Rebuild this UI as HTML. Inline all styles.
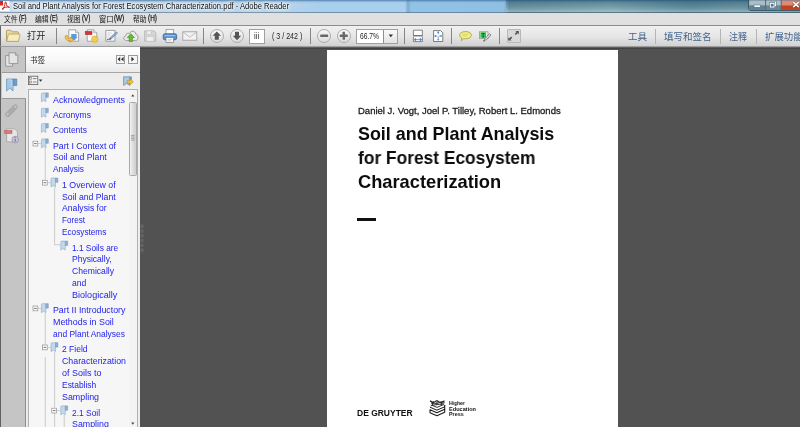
<!DOCTYPE html>
<html lang="zh">
<head>
<meta charset="utf-8">
<title>Soil and Plant Analysis for Forest Ecosystem Characterization.pdf - Adobe Reader</title>
<style>
*{box-sizing:border-box;margin:0;padding:0}
html,body{width:800px;height:427px;overflow:hidden;background:#525252;font-family:"Liberation Sans","Noto Sans CJK SC",sans-serif;}
.abs{position:absolute}
.t{position:absolute;white-space:nowrap;transform-origin:0 50%;line-height:1}
svg{position:absolute;overflow:visible}
#titlebar{left:0;top:0;width:800px;height:13px;background:linear-gradient(rgba(45,95,145,.7) 0,rgba(60,110,160,.22) 1.6px,rgba(255,255,255,0) 3px,rgba(255,255,255,0) 11.6px,rgba(60,80,95,.55) 12.6px),linear-gradient(90deg,#cbddec 0,#bfd7ea 120px,#b4d3ec 290px,#a8cfed 320px,#a8cfed 405px,#7eaad0 408px,#93c2e7 411px,#90bfe4 504px,#66929f 509px,#78a2ad 610px,#5c8999 690px,#68929f 740px,#567f8e 800px)}
#tbr{left:506px;top:0;width:294px;height:12px;background:linear-gradient(rgba(20,60,85,.32) 0,rgba(20,60,85,.1) 45%,rgba(255,255,255,.08) 75%,rgba(255,255,255,.3) 100%)}
#menubar{left:0;top:12.6px;width:800px;height:13px;background:#e0e0e0;border-bottom:1px solid #8c8c8c}
#toolbar{left:0;top:25.6px;width:800px;height:21.4px;background:linear-gradient(#f0f0f0,#e6e6e6 50%,#cfcfcf);border-left:1px solid #666}
#tbline{left:0;top:46.4px;width:800px;height:2.6px;background:linear-gradient(#c2c2c2 0,#6a6a6a 40%,#3e3e3e 75%,#4a4a4a 100%)}
.sep{position:absolute;top:28px;width:1px;height:16px;background:#868686}
.sep2{position:absolute;top:29px;width:1px;height:15px;background:#b4b4b4}
#navstrip{left:0;top:47.4px;width:26.2px;height:380px;background:#c5c5c5;border-left:1.6px solid #606060;border-right:.8px solid #8e8e8e}
#navact{left:1.6px;top:72px;width:25px;height:27px;background:#eaeaea;border-top:1px solid #9a9a9a;border-bottom:1px solid #9a9a9a}
#bmhead{left:26.2px;top:47.4px;width:113.8px;height:24.6px;background:linear-gradient(#ffffff,#f7f7f7 55%,#e9e9e9);}
#bmbody{left:26.2px;top:72px;width:113.8px;height:355px;background:#ededed;border-top:1px solid #a6a6a6}
#tree{left:28px;top:89px;width:110px;height:345px;background:#f6f6f6;border:1px solid #b0b0b0}
#sbar{left:128.5px;top:90px;width:8.5px;height:337px;background:#f3f3f3}
#thumb{left:129px;top:101.5px;width:7.5px;height:74.5px;border:1px solid #a8a8a8;border-radius:1.5px;background:linear-gradient(90deg,#f4f4f4,#dcdcdc 50%,#cfcfcf)}
#page{left:326.7px;top:50px;width:291.4px;height:380px;background:#fff}
.cb{position:absolute;width:14px;height:14px;border-radius:50%;border:1px solid #acacac;background:linear-gradient(#f8f8f8,#dcdcdc)}
.box{position:absolute;background:#fff;border:1px solid #a0a0a0}
.pb{position:absolute;top:54.5px;height:9.5px;border:1px solid #9a9a9a;background:#f6f6f6}
#wrap{position:absolute;left:0;top:0;width:800px;height:427px;overflow:hidden;filter:blur(.35px)}
</style>
</head>
<body>
<div id="wrap">
<div id="titlebar" class="abs"></div><div id="tbr" class="abs"></div>
<div id="menubar" class="abs"></div>
<div id="toolbar" class="abs"></div>
<div id="tbline" class="abs"></div>
<div class="sep" style="left:56px"></div><div class="sep" style="left:203px"></div><div class="sep" style="left:310px"></div><div class="sep" style="left:404px"></div><div class="sep" style="left:451px"></div><div class="sep" style="left:499px"></div>
<div class="sep2" style="left:655px"></div><div class="sep2" style="left:720px"></div><div class="sep2" style="left:756px"></div>
<div class="cb" style="left:209.8px;top:28.8px"></div><div class="cb" style="left:230px;top:28.8px"></div>
<div class="cb" style="left:317.2px;top:28.8px"></div><div class="cb" style="left:336.8px;top:28.8px"></div>
<div class="box" style="left:249px;top:28.5px;width:16px;height:15.5px"></div>
<div class="box" style="left:356px;top:28.5px;width:42px;height:15px;background:linear-gradient(#fafafa,#e2e2e2)"></div>
<div class="abs" style="left:357px;top:29.5px;width:27px;height:13px;background:#fff;border-right:1px solid #8e8e8e"></div>
<div class="abs" style="left:506.5px;top:29px;width:14px;height:13.5px;background:#d9d9d9;border:1px solid #b8b8b8;border-radius:1px"></div>
<div id="navstrip" class="abs"></div><div id="navact" class="abs"></div>
<div id="bmhead" class="abs"></div>
<div id="bmbody" class="abs"></div>
<div id="tree" class="abs"></div>
<div id="sbar" class="abs"></div><div id="thumb" class="abs"></div>
<div class="pb" style="left:115.7px;width:9.8px"></div><div class="pb" style="left:127.9px;width:9.8px"></div>
<div id="page" class="abs"></div>
<div class="abs" style="left:357px;top:218px;width:18.6px;height:2.6px;background:#111"></div>
<svg id="ic" width="800" height="427" viewBox="0 0 800 427" style="left:0;top:0">
<!-- title pdf icon -->
<g>
<rect x="0" y="1" width="9.5" height="10" fill="#fff"/>
<rect x="0" y="1" width="3" height="4.5" fill="#d4282a"/>
<path d="M2.5 10 C4 8 5 5 5 3 C5 1.5 6.2 1.5 6.2 3 C6 5.5 8 7.5 9.5 7.5 M2 8.6 C4.5 7.2 7 6.8 9.5 7" fill="none" stroke="#c8201c" stroke-width="1"/>
</g>
<!-- window buttons -->
<g>
<path d="M748.5 0 H800 V10.5 H751 Q748.5 10.5 748.5 8 Z" fill="#7f9fae" stroke="#2e4a58" stroke-width=".8"/>
<rect x="749.3" y="0.5" width="16" height="5" fill="#a9bdc8"/><rect x="749.3" y="5.5" width="16" height="4.4" fill="#5f8192"/>
<rect x="766" y="0.5" width="15" height="5" fill="#a9bdc8"/><rect x="766" y="5.5" width="15" height="4.4" fill="#668797"/>
<rect x="781.5" y="0.5" width="18.5" height="5" fill="#dd8a78"/><rect x="781.5" y="5.5" width="18.5" height="4.4" fill="#c6401f"/>
<path d="M765.6 0 V10 M781.2 0 V10" stroke="#3a5462" stroke-width=".7"/>
<rect x="754" y="5" width="6.3" height="2.2" fill="#fff" stroke="#44606e" stroke-width=".5"/>
<rect x="771.8" y="2" width="3.8" height="3.8" fill="none" stroke="#44606e" stroke-width="1.8"/>
<rect x="771.8" y="2" width="3.8" height="3.8" fill="none" stroke="#fff" stroke-width="1"/>
<rect x="770.3" y="3.3" width="3.8" height="3.8" fill="#7f9fae" stroke="#44606e" stroke-width="1.8"/>
<rect x="770.3" y="3.3" width="3.8" height="3.8" fill="#58788a" stroke="#fff" stroke-width="1"/>
<path d="M793.2 2.2 L798.8 7.2 M798.8 2.2 L793.2 7.2" stroke="#6a2a1a" stroke-width="2.6"/>
<path d="M793.2 2.2 L798.8 7.2 M798.8 2.2 L793.2 7.2" stroke="#fff" stroke-width="1.7"/>
</g>
<!-- folder -->
<g stroke-linejoin="round">
<path d="M6.5 41 V31 Q6.5 30.2 7.3 30.2 H10.8 L12 31.8 H17.6 Q18.4 31.8 18.4 32.6 V41 Z" fill="#ead9a0" stroke="#a98f55" stroke-width=".8"/>
<path d="M6.6 41.4 L8.3 34.6 Q8.5 34 9.2 34 H19.4 Q20.2 34 20 34.8 L18.4 41.4 Z" fill="#f6ebbd" stroke="#b49a5e" stroke-width=".8"/>
</g>
<!-- icon1: page + blue arrow + yellow curved arrow -->
<g>
<path d="M68.8 29.8 H75.6 L78.6 32.8 V41.2 H68.8 Z" fill="#fdfdfd" stroke="#8e8e8e" stroke-width=".8"/>
<path d="M75.6 29.8 V32.8 H78.6" fill="#e8e8e8" stroke="#8e8e8e" stroke-width=".6"/>
<path d="M71.2 34 H76.6 V37.2 H77.6 L73.9 40.8 L70.2 37.2 H71.2 Z" fill="#5a9bdc"/>
<path d="M65.2 36 C64.6 39.5 67.5 41.4 70.2 40.6 V42.3 L73.4 39.6 L70.2 37 V38.6 C68.4 39 66.8 38 67.4 35.4 Z" fill="#f4c644" stroke="#c28a18" stroke-width=".6" stroke-linejoin="round"/>
</g>
<!-- icon2: page + red label + gear -->
<g>
<path d="M87.2 29.8 H93.8 L96.8 32.8 V41.2 H87.2 Z" fill="#fdfdfd" stroke="#8e8e8e" stroke-width=".8"/>
<path d="M93.8 29.8 V32.8 H96.8" fill="#e8e8e8" stroke="#8e8e8e" stroke-width=".6"/>
<rect x="85.2" y="31.4" width="6.8" height="3.2" fill="#dc3236" stroke="#a81c20" stroke-width=".5"/>
<path d="M98.50 39.30 L97.48 40.41 L97.42 41.92 L95.91 41.98 L94.80 43.00 L93.69 41.98 L92.18 41.92 L92.12 40.41 L91.10 39.30 L92.12 38.19 L92.18 36.68 L93.69 36.62 L94.80 35.60 L95.91 36.62 L97.42 36.68 L97.48 38.19 Z" fill="#f3cd52" stroke="#c79a26" stroke-width=".5" stroke-linejoin="round"/>
</g>
<!-- icon3: page + pen -->
<g>
<path d="M105.8 30.4 H115 V41.2 H105.8 Z" fill="#f8f8f8" stroke="#8a8a8a" stroke-width=".8"/>
<path d="M107.4 33 H111.5 M107.4 35 H110.5 M107.4 37 H109.5" stroke="#c4c4c4" stroke-width=".7"/>
<rect x="107.3" y="38.8" width="1.2" height="1.2" fill="#333"/>
<path d="M109.2 39.8 L109.9 37.8 L116.4 31.9 L117.6 33.1 L111.1 39.1 Z" fill="#86aedb" stroke="#4a6c98" stroke-width=".5" stroke-linejoin="round"/>
<path d="M109.2 39.8 L109.9 37.8 L111.1 39.1 Z" fill="#555"/>
</g>
<!-- icon4: cloud + green arrow -->
<g>
<path d="M126.6 40.6 C123.4 40.6 122.6 36.6 125.8 35.8 C125.6 33.4 128.2 32.4 129.6 33.6 C130.6 30.2 135.4 30.4 135.8 34.2 C138.8 34.4 139 40.6 135.4 40.6 Z" fill="#e9e9e9" stroke="#8c8c8c" stroke-width=".8"/>
<path d="M130.8 33.8 L134.4 37.6 H132.4 V41.6 H129.2 V37.6 H127.2 Z" fill="#66bb33" stroke="#3d8a1a" stroke-width=".6" stroke-linejoin="round"/>
</g>
<!-- icon5: floppy disabled -->
<g>
<path d="M144.6 30.9 H154.2 L155.8 32.5 V41.2 H144.6 Z" fill="#d6d6d6" stroke="#b2b2b2" stroke-width=".8"/>
<rect x="146.8" y="30.9" width="6" height="3.6" fill="#eee" stroke="#c2c2c2" stroke-width=".6"/>
<rect x="146.4" y="36.6" width="7.4" height="4.6" fill="#f0f0f0" stroke="#c2c2c2" stroke-width=".6"/>
<rect x="150.8" y="31.5" width="1.2" height="2.2" fill="#c4c4c4"/>
</g>
<!-- icon6: printer -->
<g>
<rect x="166" y="29.5" width="7.6" height="5" fill="#fcfcfc" stroke="#8a8a8a" stroke-width=".7"/>
<rect x="163.2" y="33.8" width="13.4" height="6" rx="1.6" fill="#5d93cd" stroke="#2f5f96" stroke-width=".8"/>
<rect x="164.4" y="35" width="11" height="1.2" fill="#9cc2e8"/>
<rect x="166" y="37.6" width="7.6" height="4.8" fill="#fcfcfc" stroke="#7a7a7a" stroke-width=".7"/>
<path d="M167.4 39.4 H172.2 M167.4 40.8 H171" stroke="#b0b0b0" stroke-width=".6"/>
</g>
<!-- icon7: envelope -->
<g>
<rect x="182.8" y="31.8" width="14" height="8.4" fill="#f1f1f1" stroke="#9a9a9a" stroke-width=".8"/>
<path d="M183 32 L189.8 37.2 L196.6 32" fill="none" stroke="#a6a6a6" stroke-width=".7"/>
</g>
<!-- up/down arrows -->
<path d="M216.8 31.4 L221 35.8 H218.8 V39.8 H214.8 V35.8 H212.6 Z" fill="#565656"/>
<path d="M237 40.2 L241.2 35.8 H239 V31.8 H235 V35.8 H232.8 Z" fill="#565656"/>
<!-- minus/plus -->
<rect x="320.2" y="34.6" width="8" height="2.4" rx=".4" fill="#686868"/>
<rect x="339.8" y="34.6" width="8" height="2.4" rx=".4" fill="#686868"/><rect x="342.6" y="31.8" width="2.4" height="8" rx=".4" fill="#686868"/>
<!-- dropdown arrow -->
<path d="M388.6 34.6 H393 L390.8 37.2 Z" fill="#333"/>
<!-- fit width -->
<g>
<path d="M413.4 35 V30.2 H422.4 V35" fill="#fff" stroke="#6a6a6a" stroke-width=".8"/>
<path d="M413 35.8 H422.8" stroke="#444" stroke-width="1"/>
<path d="M413.4 36.8 V41.6 H422.4 V36.8" fill="#fff" stroke="#6a6a6a" stroke-width=".8"/>
<path d="M414.2 39.6 H421.6 M414.2 39.6 l1.4 -1.3 v2.6z M421.6 39.6 l-1.4 -1.3 v2.6z" fill="#4a86d0" stroke="#4a86d0" stroke-width=".8"/>
</g>
<!-- fit page -->
<g>
<path d="M433.6 30.6 H440.6 L442.8 32.8 V41.5 H433.6 Z" fill="#fff" stroke="#5e5e5e" stroke-width=".8"/>
<path d="M438.2 31.6 V40.4 M434.6 36 H441.8" stroke="#4a86d0" stroke-width=".8" stroke-dasharray="2.6 2"/>
<path d="M438.2 31.3 l1.3 1.5 h-2.6z M438.2 40.8 l1.3 -1.5 h-2.6z M434.3 36 l1.5 -1.3 v2.6z M442.1 36 l-1.5 -1.3 v2.6z" fill="#3f7ccc"/>
</g>
<!-- comment bubble -->
<path d="M465.6 31.6 C469.2 31.6 471.4 33.2 471.4 35.2 C471.4 37.4 468.8 38.8 465.6 38.8 C465 38.8 464.4 38.8 463.8 38.6 L461.4 40.8 L461.8 38 C460.4 37.4 459.6 36.4 459.6 35.2 C459.6 33.2 462 31.6 465.6 31.6 Z" fill="#f2ee86" stroke="#a09c3a" stroke-width=".8" stroke-linejoin="round"/>
<path d="M462.4 34.4 H468.6 M462.4 36 H467" stroke="#d2cc60" stroke-width=".7"/>
<!-- highlight -->
<g>
<rect x="479.6" y="31.8" width="8.4" height="6.8" fill="#eee" stroke="#8a8a8a" stroke-width=".7"/>
<rect x="480.4" y="32.4" width="5.6" height="5.4" fill="#2fc24a"/>
<path d="M481.6 33.4 H484.8 M483.2 33.4 V37 M482.4 37 H484" stroke="#0a5a1a" stroke-width=".8"/>
<path d="M484.2 40.4 L485 38.4 L489.6 33.6 L491 35 L486.4 39.8 Z" fill="#d8d8d8" stroke="#555" stroke-width=".6" stroke-linejoin="round"/>
<circle cx="484" cy="40.8" r=".9" fill="#2fa040"/>
</g>
<!-- expand arrows -->
<g fill="#555">
<path d="M515.4 31 H518.8 V34.4 L517.7 33.3 L515.9 35.1 L514.7 33.9 L516.5 32.1 Z"/>
<path d="M511.6 40.6 H508.2 V37.2 L509.3 38.3 L511.1 36.5 L512.3 37.7 L510.5 39.5 Z"/>
</g>
<!-- panel header buttons -->
<path d="M120.2 56.8 V61.6 L117.6 59.2 Z M123.6 56.8 V61.6 L121 59.2 Z" fill="#333"/>
<path d="M131.4 56.8 V61.6 L134.2 59.2 Z" fill="#333"/>
<!-- nav: pages icon -->
<g fill="#e4e4e4" stroke="#8a8a8a" stroke-width=".8">
<path d="M5.6 55.6 H12.6 V66.2 H5.6 Z"/>
<path d="M9 52.8 H15.4 L17.8 55.2 V63.6 H9 Z"/>
<path d="M15.4 52.8 V55.2 H17.8" fill="none"/>
</g>
<!-- nav: bookmark ribbon (active) -->
<g>
<path d="M6.6 79 H13 V91 L9.8 88 L6.6 91 Z" fill="#a4c9e8" stroke="#5f8db6" stroke-width=".7" stroke-linejoin="round"/>
<path d="M13 79 H16.8 V85.6 H13 Z" fill="#6f9cc6" stroke="#4f7ca6" stroke-width=".6"/>
<path d="M7.6 80 H12 V87" fill="none" stroke="#c4ddf2" stroke-width=".8"/>
</g>
<!-- nav: paperclip -->
<path d="M8.6 116.4 L16.6 108.2 C18.4 106.2 15.8 103.6 13.8 105.6 L6.2 113.4 C4.8 115 6.8 117 8.4 115.6 L14.6 109.2 C15.4 108.2 14.2 107.2 13.4 108 L8.6 113" fill="none" stroke="#a4a4a4" stroke-width="1.1" stroke-linecap="round"/>
<!-- nav: red doc with info -->
<g>
<path d="M6.6 128.8 H14.6 L17.4 131.6 V141.8 H6.6 Z" fill="#e6e6e6" stroke="#a2a2a2" stroke-width=".8"/>
<rect x="4.6" y="130.4" width="7.4" height="3.2" fill="#d87a7c" stroke="#b85a5e" stroke-width=".5"/>
<circle cx="15.2" cy="139.6" r="3.3" fill="#c9c4d8" stroke="#8e88a8" stroke-width=".7"/>
<path d="M15.2 138.8 V141.6 M15.2 137.2 V138" stroke="#6a648a" stroke-width="1"/>
</g>
<!-- panel toolbar: options icon -->
<g>
<rect x="28.4" y="76.2" width="9.4" height="8.4" fill="#f4f4f4" stroke="#5e5e5e" stroke-width=".8"/>
<rect x="29.6" y="77.6" width="2" height="2" fill="none" stroke="#555" stroke-width=".5"/><rect x="29.6" y="81" width="2" height="2" fill="none" stroke="#555" stroke-width=".5"/>
<path d="M32.8 78.6 H36.6 M32.8 82 H36.6" stroke="#666" stroke-width=".8"/>
<path d="M38.8 79.6 H42.4 L40.6 81.8 Z" fill="#333"/>
</g>
<!-- panel toolbar: new bookmark -->
<g>
<path d="M123.6 76.8 H129.6 V85.4 L126.6 83.4 L123.6 85.4 Z" fill="#a9cbe8" stroke="#5e86ae" stroke-width=".7" stroke-linejoin="round"/>
<path d="M129.6 76.8 H131.4 V80 H129.6" fill="#6e9cc8" stroke="#4c78a6" stroke-width=".5"/>
<path d="M127 80.6 H130 V78.8 L133.4 81.8 L130 84.8 V83 H127 Z" fill="#f3c240" stroke="#bf8a1c" stroke-width=".6" stroke-linejoin="round"/>
</g>
<!-- scrollbar arrows and grip -->
<path d="M131.2 96.4 L132.8 94.2 L134.4 96.4 Z" fill="#444"/>
<path d="M131.2 422.6 L132.8 424.8 L134.4 422.6 Z" fill="#444"/>
<path d="M131 135.4 H134.6 M131 137 H134.6 M131 138.6 H134.6 M131 140.2 H134.6" stroke="#8a8a8a" stroke-width=".7"/>
<!-- resize grip in dark area -->
<path d="M142.1 224.5 V253.5" stroke="#646464" stroke-width="3" stroke-dasharray="3.4 1.4"/>
<g><path d="M41.4 93.9 Q41.4 92.9 42.4 92.9 H45.9 V101.8 L43.65 100.4 L41.4 101.8 Z" fill="#c2d9ec" stroke="#8fa8be" stroke-width=".6" stroke-linejoin="round"/><path d="M45.9 92.9 H48.3 V97.3 H45.9 Z" fill="#8db0d2" stroke="#7494b6" stroke-width=".5"/><path d="M41.4 109.3 Q41.4 108.3 42.4 108.3 H45.9 V117.2 L43.65 115.8 L41.4 117.2 Z" fill="#c2d9ec" stroke="#8fa8be" stroke-width=".6" stroke-linejoin="round"/><path d="M45.9 108.3 H48.3 V112.7 H45.9 Z" fill="#8db0d2" stroke="#7494b6" stroke-width=".5"/><path d="M41.4 124.6 Q41.4 123.6 42.4 123.6 H45.9 V132.5 L43.65 131.1 L41.4 132.5 Z" fill="#c2d9ec" stroke="#8fa8be" stroke-width=".6" stroke-linejoin="round"/><path d="M45.9 123.6 H48.3 V128.0 H45.9 Z" fill="#8db0d2" stroke="#7494b6" stroke-width=".5"/><path d="M41.4 139.9 Q41.4 138.9 42.4 138.9 H45.9 V147.8 L43.65 146.4 L41.4 147.8 Z" fill="#c2d9ec" stroke="#8fa8be" stroke-width=".6" stroke-linejoin="round"/><path d="M45.9 138.9 H48.3 V143.3 H45.9 Z" fill="#8db0d2" stroke="#7494b6" stroke-width=".5"/><rect x="33" y="141.2" width="4.8" height="4.8" fill="#fff" stroke="#8e8e8e" stroke-width=".7"/><path d="M34.1 143.6 H36.7" stroke="#333" stroke-width=".7"/><path d="M37.8 143.6 H41.4" stroke="#b4b4b4" stroke-width=".6"/><path d="M51.0 179.0 Q51.0 178.0 52.0 178.0 H55.5 V186.9 L53.25 185.5 L51.0 186.9 Z" fill="#c2d9ec" stroke="#8fa8be" stroke-width=".6" stroke-linejoin="round"/><path d="M55.5 178.0 H57.9 V182.4 H55.5 Z" fill="#8db0d2" stroke="#7494b6" stroke-width=".5"/><rect x="42.4" y="180.3" width="4.8" height="4.8" fill="#fff" stroke="#8e8e8e" stroke-width=".7"/><path d="M43.5 182.7 H46.1" stroke="#333" stroke-width=".7"/><path d="M47.199999999999996 182.7 H50.8" stroke="#b4b4b4" stroke-width=".6"/><path d="M60.8 242.1 Q60.8 241.1 61.8 241.1 H65.3 V250.0 L63.05 248.6 L60.8 250.0 Z" fill="#c2d9ec" stroke="#8fa8be" stroke-width=".6" stroke-linejoin="round"/><path d="M65.3 241.1 H67.7 V245.5 H65.3 Z" fill="#8db0d2" stroke="#7494b6" stroke-width=".5"/><path d="M41.4 304.7 Q41.4 303.7 42.4 303.7 H45.9 V312.6 L43.65 311.2 L41.4 312.6 Z" fill="#c2d9ec" stroke="#8fa8be" stroke-width=".6" stroke-linejoin="round"/><path d="M45.9 303.7 H48.3 V308.1 H45.9 Z" fill="#8db0d2" stroke="#7494b6" stroke-width=".5"/><rect x="33" y="306.0" width="4.8" height="4.8" fill="#fff" stroke="#8e8e8e" stroke-width=".7"/><path d="M34.1 308.4 H36.7" stroke="#333" stroke-width=".7"/><path d="M37.8 308.4 H41.4" stroke="#b4b4b4" stroke-width=".6"/><path d="M51.0 343.7 Q51.0 342.7 52.0 342.7 H55.5 V351.6 L53.25 350.2 L51.0 351.6 Z" fill="#c2d9ec" stroke="#8fa8be" stroke-width=".6" stroke-linejoin="round"/><path d="M55.5 342.7 H57.9 V347.1 H55.5 Z" fill="#8db0d2" stroke="#7494b6" stroke-width=".5"/><rect x="42.4" y="345.0" width="4.8" height="4.8" fill="#fff" stroke="#8e8e8e" stroke-width=".7"/><path d="M43.5 347.4 H46.1" stroke="#333" stroke-width=".7"/><path d="M47.199999999999996 347.4 H50.8" stroke="#b4b4b4" stroke-width=".6"/><path d="M60.8 406.9 Q60.8 405.9 61.8 405.9 H65.3 V414.8 L63.05 413.4 L60.8 414.8 Z" fill="#c2d9ec" stroke="#8fa8be" stroke-width=".6" stroke-linejoin="round"/><path d="M65.3 405.9 H67.7 V410.3 H65.3 Z" fill="#8db0d2" stroke="#7494b6" stroke-width=".5"/><rect x="51.8" y="408.2" width="4.8" height="4.8" fill="#fff" stroke="#8e8e8e" stroke-width=".7"/><path d="M52.9 410.6 H55.5" stroke="#333" stroke-width=".7"/><path d="M56.599999999999994 410.6 H60.199999999999996" stroke="#b4b4b4" stroke-width=".6"/><path d="M45.2 148 V180 M45.2 312.8 V344.8 M45.2 357 V427" stroke="#b8b8b8" stroke-width=".7" fill="none"/><path d="M54.6 187.2 V244.8 H60.6 M54.6 352 V407.6 M54.6 412.8 V427" stroke="#b8b8b8" stroke-width=".7" fill="none"/><path d="M64.2 415 V427" stroke="#b8b8b8" stroke-width=".7" fill="none"/></g>
<!-- logo -->
<g fill="none" stroke="#1a1a1a" stroke-linejoin="round" stroke-linecap="round">
<path d="M430 409.8 L436.9 412.7 L444.7 409.2 V412.3 L436.9 415.7 L430 412.8 Z" stroke-width="1.05"/>
<path d="M444.7 405.2 V409.2" stroke-width="1.05"/>
<path d="M430.4 407.4 L436.9 410.2 L444.7 406.8" stroke-width="1"/>
<path d="M432.4 405.4 L437 407.4 L443.6 404.6" stroke-width=".9"/>
<path d="M430.4 401 C431.8 402.4 433.4 402.8 435 401.6 C436 400.8 437.6 400.6 438.6 401.6 C440.2 402.8 442.4 402 444.2 401" stroke-width="1.1"/>
<path d="M431.6 403.6 C434 402.6 436 403.8 438 403 C440 402.2 442 403.4 444.2 402.8" stroke-width="1"/>
<path d="M431 405.8 C433 404.4 434.6 405.2 436.4 404.6 C438.4 404 440.6 405 443 403.8" stroke-width=".9"/>
<path d="M433.4 401.6 L432.4 405 M437.2 401 L436.6 404.8 M441 401.8 L441.6 404.6" stroke-width=".8"/>
</g>
</svg>
<span class="t" id="t0" style="left:12.80px;top:1.80px;font-size:8.5px;transform:scaleX(0.8933);color:#0a0a0a;text-shadow:0 0 2px #fff,0 0 4px #fff,0 0 6px #fff">Soil and Plant Analysis for Forest Ecosystem Characterization.pdf - Adobe Reader</span>
<span class="t" id="t1" style="left:3.80px;top:15.60px;font-size:7.7px;transform:scaleX(0.8861);color:#151515">文件</span>
<span class="t" id="t2" style="left:18.70px;top:14.40px;font-size:8.5px;transform:scaleX(0.6986);color:#151515;-webkit-text-stroke:.25px #151515">(F)</span>
<span class="t" id="t3" style="left:35.20px;top:15.60px;font-size:7.7px;transform:scaleX(0.8861);color:#151515">编辑</span>
<span class="t" id="t4" style="left:50.10px;top:14.40px;font-size:8.5px;transform:scaleX(0.6696);color:#151515;-webkit-text-stroke:.25px #151515">(E)</span>
<span class="t" id="t5" style="left:66.60px;top:15.60px;font-size:7.7px;transform:scaleX(0.8861);color:#151515">视图</span>
<span class="t" id="t6" style="left:81.50px;top:14.40px;font-size:8.5px;transform:scaleX(0.7391);color:#151515;-webkit-text-stroke:.25px #151515">(V)</span>
<span class="t" id="t7" style="left:99.00px;top:15.60px;font-size:7.7px;transform:scaleX(0.9464);color:#151515">窗口</span>
<span class="t" id="t8" style="left:113.90px;top:14.40px;font-size:8.5px;transform:scaleX(0.7435);color:#151515;-webkit-text-stroke:.25px #151515">(W)</span>
<span class="t" id="t9" style="left:133.20px;top:15.60px;font-size:7.7px;transform:scaleX(0.8861);color:#151515">帮助</span>
<span class="t" id="t10" style="left:148.10px;top:14.40px;font-size:8.5px;transform:scaleX(0.7519);color:#151515;-webkit-text-stroke:.25px #151515">(H)</span>
<span class="t" id="t11" style="left:26.90px;top:32.20px;font-size:9.3px;transform:scaleX(0.9892);color:#2a2a2a">打开</span>
<span class="t" id="t12" style="left:254.00px;top:31.80px;font-size:8.4px;transform:scaleX(0.9438);color:#333">iii</span>
<span class="t" id="t13" style="left:271.50px;top:32.00px;font-size:8.3px;transform:scaleX(0.8532);color:#222">( 3 / 242 )</span>
<span class="t" id="t14" style="left:360.00px;top:32.00px;font-size:8.3px;transform:scaleX(0.8075);color:#222">66.7%</span>
<span class="t" id="t15" style="left:627.50px;top:31.60px;font-size:9.6px;transform:scaleX(0.9952);color:#42628c">工具</span>
<span class="t" id="t16" style="left:664.00px;top:31.60px;font-size:9.6px;transform:scaleX(0.9921);color:#42628c">填写和签名</span>
<span class="t" id="t17" style="left:729.00px;top:31.60px;font-size:9.6px;transform:scaleX(0.9442);color:#42628c">注释</span>
<span class="t" id="t18" style="left:765.00px;top:31.60px;font-size:9.6px;transform:scaleX(0.9799);color:#42628c">扩展功能</span>
<span class="t" id="t19" style="left:29.60px;top:56.60px;font-size:7.8px;transform:scaleX(0.9749);color:#1a1a1a">书签</span>
<span class="t" id="t20" style="left:53.00px;top:94.50px;font-size:9.4px;transform:scaleX(0.9464);color:#2222f0">Acknowledgments</span>
<span class="t" id="t21" style="left:53.00px;top:109.90px;font-size:9.4px;transform:scaleX(0.9098);color:#2222f0">Acronyms</span>
<span class="t" id="t22" style="left:53.00px;top:125.20px;font-size:9.4px;transform:scaleX(0.9039);color:#2222f0">Contents</span>
<span class="t" id="t23" style="left:53.00px;top:140.50px;font-size:9.4px;transform:scaleX(0.9305);color:#2222f0">Part I Context of</span>
<span class="t" id="t24" style="left:53.00px;top:152.40px;font-size:9.4px;transform:scaleX(0.9271);color:#2222f0">Soil and Plant</span>
<span class="t" id="t25" style="left:53.00px;top:164.20px;font-size:9.4px;transform:scaleX(0.8858);color:#2222f0">Analysis</span>
<span class="t" id="t26" style="left:62.40px;top:179.60px;font-size:9.4px;transform:scaleX(0.9358);color:#2222f0">1 Overview of</span>
<span class="t" id="t27" style="left:62.40px;top:191.50px;font-size:9.4px;transform:scaleX(0.9271);color:#2222f0">Soil and Plant</span>
<span class="t" id="t28" style="left:62.40px;top:203.40px;font-size:9.4px;transform:scaleX(0.9228);color:#2222f0">Analysis for</span>
<span class="t" id="t29" style="left:62.40px;top:215.30px;font-size:9.4px;transform:scaleX(0.8641);color:#2222f0">Forest</span>
<span class="t" id="t30" style="left:62.40px;top:227.20px;font-size:9.4px;transform:scaleX(0.8772);color:#2222f0">Ecosystems</span>
<span class="t" id="t31" style="left:72.20px;top:242.70px;font-size:9.4px;transform:scaleX(0.8864);color:#2222f0">1.1 Soils are</span>
<span class="t" id="t32" style="left:72.20px;top:254.40px;font-size:9.4px;transform:scaleX(0.9097);color:#2222f0">Physically,</span>
<span class="t" id="t33" style="left:72.20px;top:266.30px;font-size:9.4px;transform:scaleX(0.9164);color:#2222f0">Chemically</span>
<span class="t" id="t34" style="left:72.20px;top:278.10px;font-size:9.4px;transform:scaleX(0.9139);color:#2222f0">and</span>
<span class="t" id="t35" style="left:72.20px;top:289.80px;font-size:9.4px;transform:scaleX(0.9659);color:#2222f0">Biologically</span>
<span class="t" id="t36" style="left:53.00px;top:305.30px;font-size:9.4px;transform:scaleX(0.9389);color:#2222f0">Part II Introductory</span>
<span class="t" id="t37" style="left:53.00px;top:317.20px;font-size:9.4px;transform:scaleX(0.9482);color:#2222f0">Methods in Soil</span>
<span class="t" id="t38" style="left:53.00px;top:329.10px;font-size:9.4px;transform:scaleX(0.9023);color:#2222f0">and Plant Analyses</span>
<span class="t" id="t39" style="left:62.40px;top:344.30px;font-size:9.4px;transform:scaleX(0.9096);color:#2222f0">2 Field</span>
<span class="t" id="t40" style="left:62.40px;top:356.20px;font-size:9.4px;transform:scaleX(0.9376);color:#2222f0">Characterization</span>
<span class="t" id="t41" style="left:62.40px;top:368.30px;font-size:9.4px;transform:scaleX(0.9596);color:#2222f0">of Soils to</span>
<span class="t" id="t42" style="left:62.40px;top:380.10px;font-size:9.4px;transform:scaleX(0.9015);color:#2222f0">Establish</span>
<span class="t" id="t43" style="left:62.40px;top:391.80px;font-size:9.4px;transform:scaleX(0.9467);color:#2222f0">Sampling</span>
<span class="t" id="t44" style="left:72.20px;top:407.50px;font-size:9.4px;transform:scaleX(0.8978);color:#2222f0">2.1 Soil</span>
<span class="t" id="t45" style="left:72.20px;top:419.30px;font-size:9.4px;transform:scaleX(0.9416);color:#2222f0">Sampling</span>
<span class="t" id="t46" style="left:357.80px;top:106.70px;font-size:9px;transform:scaleX(1.0570);color:#1c1c1c;will-change:transform;-webkit-text-stroke:.28px #1c1c1c">Daniel J. Vogt, Joel P. Tilley, Robert L. Edmonds</span>
<span class="t" id="t47" style="left:358.00px;top:126.00px;font-size:17.9px;transform:scaleX(1.0005);color:#0c0c0c;font-weight:bold;will-change:transform">Soil and Plant Analysis</span>
<span class="t" id="t48" style="left:357.70px;top:150.10px;font-size:17.9px;transform:scaleX(0.9701);color:#0c0c0c;font-weight:bold;will-change:transform">for Forest Ecosystem</span>
<span class="t" id="t49" style="left:357.70px;top:174.10px;font-size:17.9px;transform:scaleX(1.0212);color:#0c0c0c;font-weight:bold;will-change:transform">Characterization</span>
<span class="t" id="t50" style="left:357.00px;top:410.10px;font-size:8.2px;transform:scaleX(1.0360);color:#111;font-weight:bold;will-change:transform">DE GRUYTER</span>
<span class="t" id="t51" style="left:449.30px;top:400.60px;font-size:5.4px;transform:scaleX(0.9235);color:#111;font-weight:bold;will-change:transform">Higher</span>
<span class="t" id="t52" style="left:449.30px;top:406.60px;font-size:5.4px;transform:scaleX(1.0364);color:#111;font-weight:bold;will-change:transform">Education</span>
<span class="t" id="t53" style="left:449.30px;top:412.20px;font-size:5.4px;transform:scaleX(0.9803);color:#111;font-weight:bold;will-change:transform">Press</span>

</div>
</body>
</html>
